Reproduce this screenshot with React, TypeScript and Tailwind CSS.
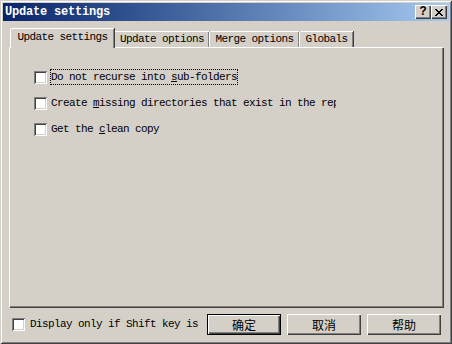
import React from 'react';

const raised =
  'bg-[#d4d0c8] shadow-[inset_1px_1px_0_#ffffff,inset_-1px_-1px_0_#404040,inset_-2px_-2px_0_#808080]';

const Check = () => (
  <div className="w-[13px] h-[13px] shrink-0 bg-white shadow-[inset_1px_1px_0_#808080,inset_-1px_-1px_0_#ffffff,inset_2px_2px_0_#404040,inset_-2px_-2px_0_#d4d0c8]" />
);

const TitleButton = ({ children }: { children: React.ReactNode }) => (
  <div className={`w-[16px] h-[14px] flex items-center justify-center text-black text-[12px] font-bold leading-none ${raised}`}>
    {children}
  </div>
);

const Tab = ({ label, width, active }: { label: string; width: number; active?: boolean }) => (
  <div
    style={{ width }}
    className={
      active
        ? 'relative z-10 h-[20px] -mb-[1px] bg-[#d4d0c8] border-t border-l border-white shadow-[inset_-1px_0_0_#808080,1px_0_0_#404040] rounded-tl-[2px] flex items-center justify-center pb-[2px]'
        : 'h-[16px] bg-[#d4d0c8] border-t border-l border-white shadow-[inset_-1px_0_0_#808080,1px_0_0_#404040] rounded-tl-[2px] flex items-center justify-center'
    }
  >
    <span className="text-[11px] tracking-[-0.6px] leading-none text-black">{label}</span>
  </div>
);

const Button = ({ label, isDefault }: { label: string; isDefault?: boolean }) => (
  <div
    className={`w-[74px] h-[21px] flex items-center justify-center text-[12px] text-black font-['Noto_Sans_CJK_SC',sans-serif] ${
      isDefault
        ? 'bg-[#d4d0c8] shadow-[inset_0_0_0_1px_#000000,inset_2px_2px_0_#ffffff,inset_-2px_-2px_0_#404040,inset_-3px_-3px_0_#808080]'
        : raised
    }`}
  >
    {label}
  </div>
);

export default function App() {
  return (
    <div className="w-[452px] h-[344px] bg-[#d4d0c8] p-[3px] flex flex-col font-['Liberation_Mono','Noto_Sans_CJK_SC',monospace] shadow-[inset_1px_1px_0_#d4d0c8,inset_-1px_-1px_0_#404040,inset_2px_2px_0_#ffffff,inset_-2px_-2px_0_#808080]">
      {/* title bar */}
      <div className="h-[18px] bg-gradient-to-r from-[#0a246a] to-[#a6caf0] flex items-center justify-between pl-[2px] pr-[2px]">
        <span className="text-white font-bold text-[12px] tracking-[-0.2px] leading-none">Update settings</span>
        <div className="flex items-center">
          <TitleButton>?</TitleButton>
          <TitleButton>
            <svg width="8" height="7" viewBox="0 0 8 7">
              <path d="M0 0L7 7M1 0L8 7M7 0L0 7M8 0L1 7" stroke="#000" strokeWidth="1" />
            </svg>
          </TitleButton>
        </div>
      </div>

      {/* tabs */}
      <div className="mt-[7px] ml-[7px] flex items-end h-[19px]">
        <Tab label="Update settings" width={104} active />
        <Tab label="Update options" width={95} />
        <Tab label="Merge options" width={90} />
        <Tab label="Globals" width={54} />
      </div>

      {/* panel */}
      <div className="ml-[6px] w-[434px] h-[260px] border-t border-l border-white shadow-[inset_-1px_-1px_0_#808080,1px_1px_0_#404040] pl-[24px] pt-[21px] flex flex-col gap-[10px]">
        <div className="flex items-center h-[16px]">
          <Check />
          <div className="ml-[3px] px-[1px] h-[16px] flex items-center outline outline-1 outline-dotted outline-black -outline-offset-1">
            <span className="text-[11px] tracking-[-0.6px] leading-none text-black whitespace-pre">
              Do not recurse into <span className="underline">s</span>ub-folders
            </span>
          </div>
        </div>
        <div className="flex items-center h-[16px]">
          <Check />
          <div className="ml-[4px] w-[285px] overflow-hidden text-[11px] tracking-[-0.6px] leading-none text-black whitespace-nowrap">
            Create <span className="underline">m</span>issing directories that exist in the repository
          </div>
        </div>
        <div className="flex items-center h-[16px]">
          <Check />
          <span className="ml-[4px] text-[11px] tracking-[-0.6px] leading-none text-black whitespace-nowrap">
            Get the <span className="underline">c</span>lean copy
          </span>
        </div>
      </div>

      {/* bottom row */}
      <div className="mt-[7px] flex items-center pl-[9px]">
        <div className="w-[188px] mr-[7px] flex items-center overflow-hidden">
          <Check />
          <span className="ml-[5px] text-[11px] tracking-[-0.6px] leading-none text-black whitespace-nowrap">
            Display only if Shift key is pressed
          </span>
        </div>
        <div className="flex gap-[6px]">
          <Button label="确定" isDefault />
          <Button label="取消" />
          <Button label="帮助" />
        </div>
      </div>
    </div>
  );
}
